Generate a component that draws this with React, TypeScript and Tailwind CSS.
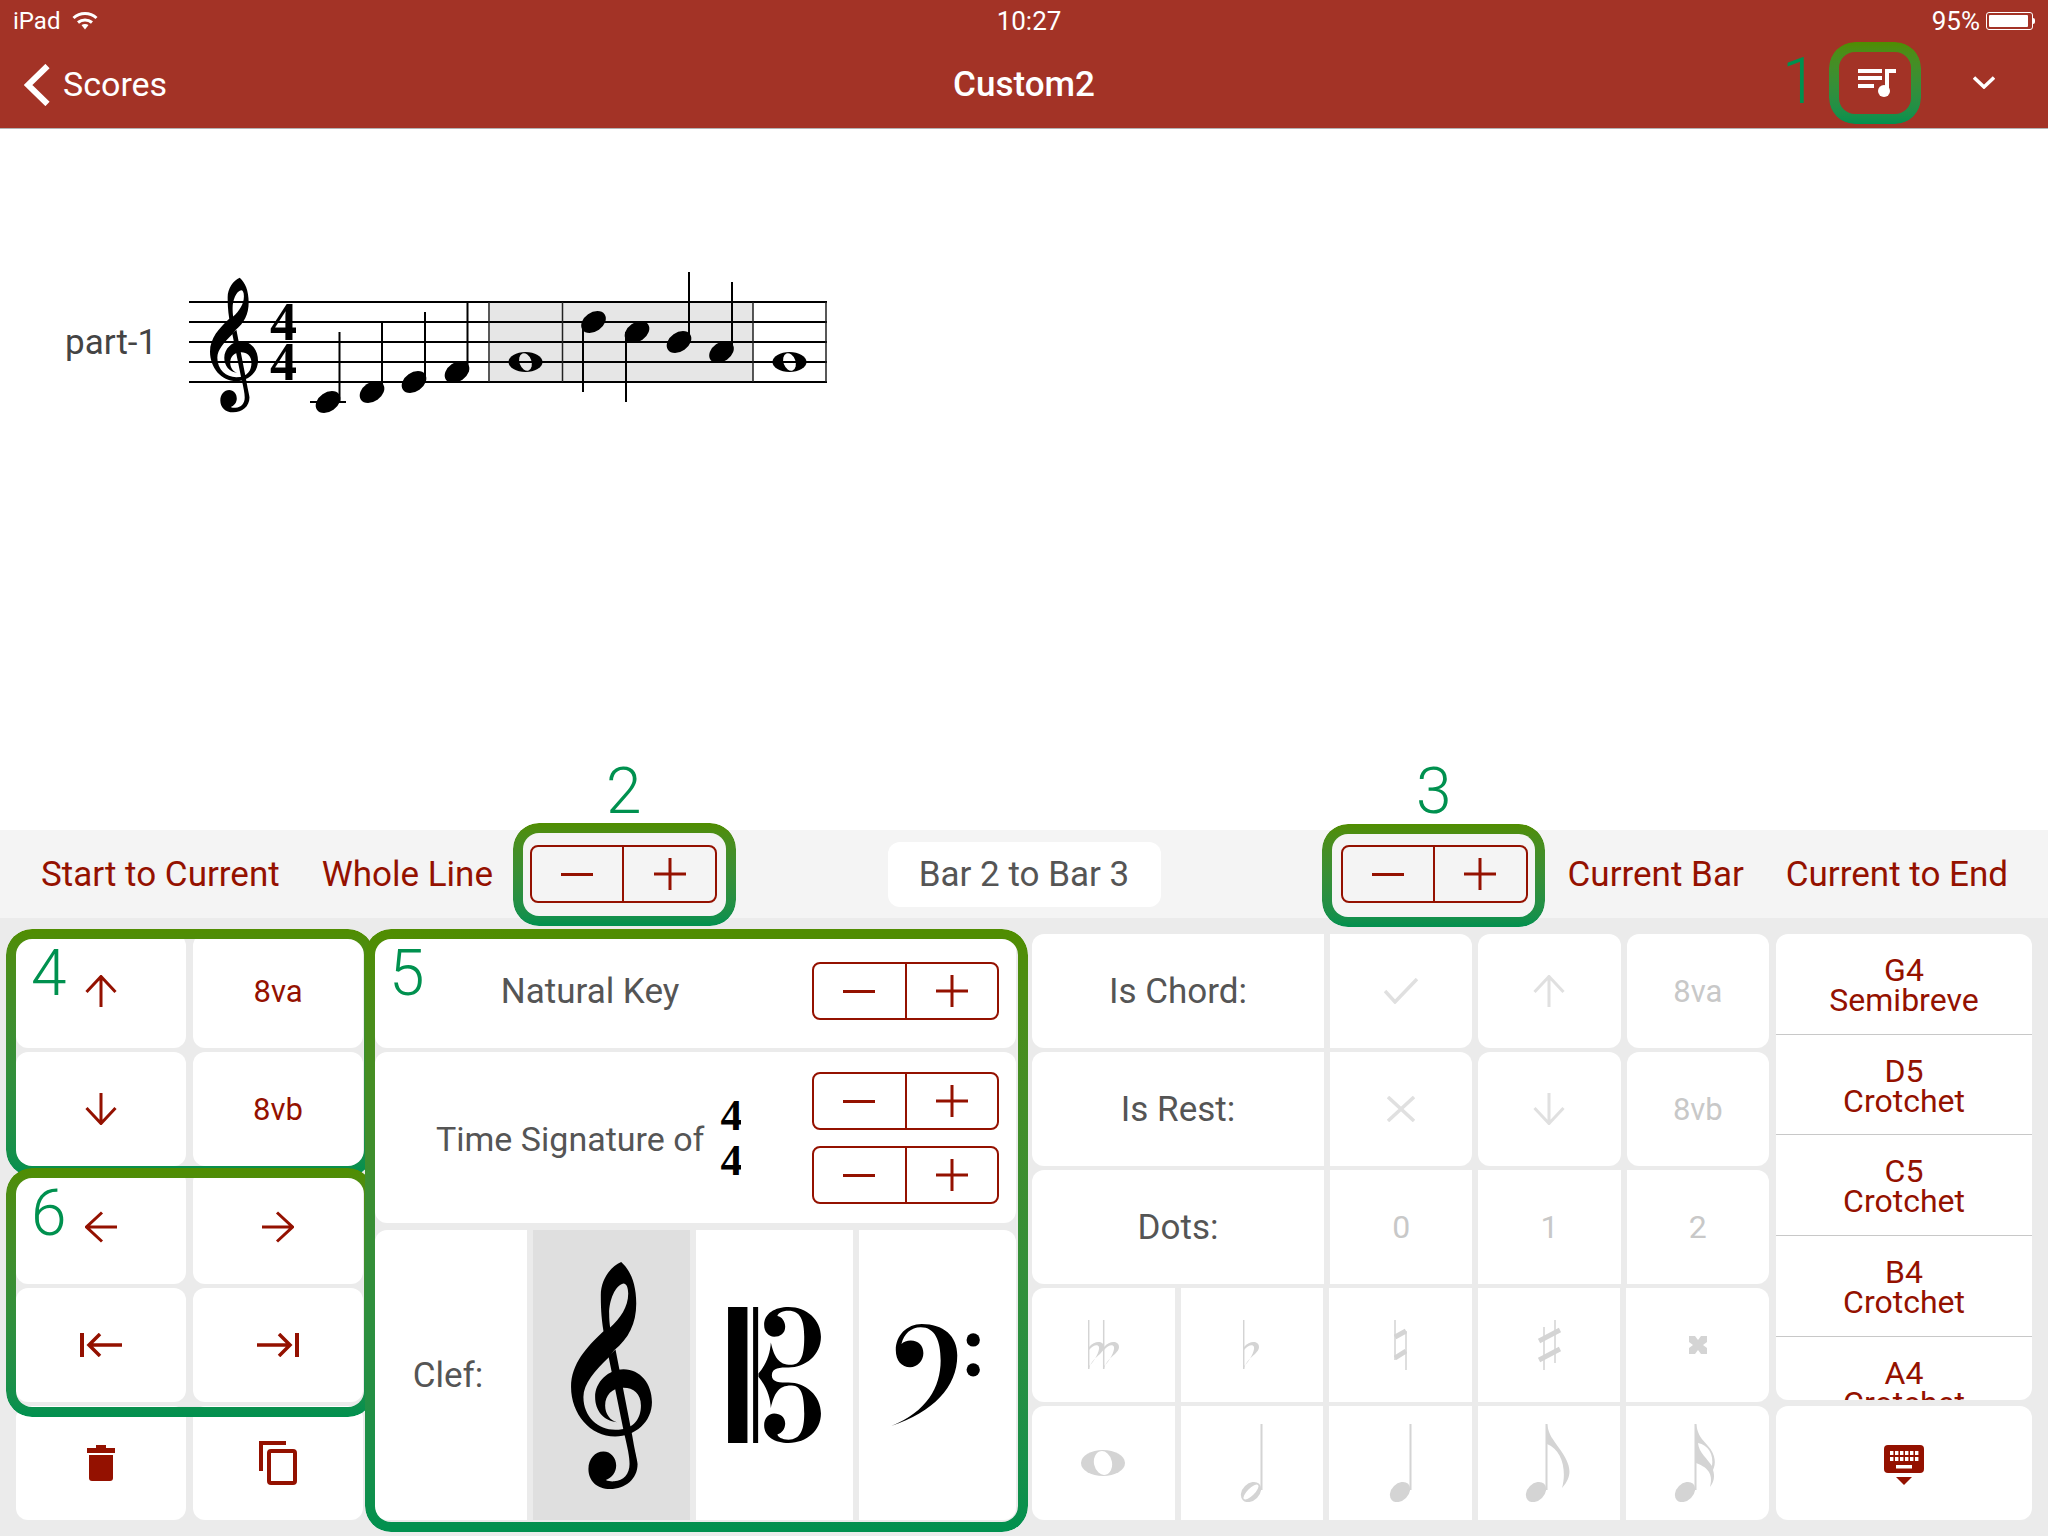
import type { ReactNode } from 'react';

const RED = '#941100';

function Stepper() {
  return (
    <div className="flex h-[58px] w-[187px] rounded-[8px] border-2 border-[#941100]">
      <div className="flex flex-1 items-center justify-center border-r-2 border-[#941100]">
        <div className="h-[3px] w-[32px] bg-[#941100]" />
      </div>
      <div className="flex flex-1 items-center justify-center">
        <svg width="32" height="32" viewBox="0 0 32 32" stroke={RED} strokeWidth="3">
          <path d="M0 16H32M16 0V32" />
        </svg>
      </div>
    </div>
  );
}

function Arrow({ dir, color = RED }: { dir: 'up' | 'down' | 'left' | 'right'; color?: string }) {
  const rotate = { up: 0, right: 90, down: 180, left: 270 }[dir];
  return (
    <svg width="32" height="32" viewBox="0 0 32 32" fill="none" stroke={color} strokeWidth="3">
      <g transform={`rotate(${rotate} 16 16)`}>
        <path d="M16 1V32M1.5 17L16 1.5L30.5 17" />
      </g>
    </svg>
  );
}

function JumpArrow({ flip }: { flip?: boolean }) {
  return (
    <svg width="42" height="24" viewBox="0 0 42 24" fill="none" stroke={RED} strokeWidth="3.5">
      <g transform={flip ? 'matrix(-1 0 0 1 42 0)' : undefined}>
        <path d="M2 0V24" strokeWidth="4" />
        <path d="M42 12H9M20 1L9 12L20 23" />
      </g>
    </svg>
  );
}

function Trash() {
  return (
    <svg width="30" height="36" viewBox="0 0 30 36" fill={RED}>
      <path d="M10 0H20V3H29V8H1V3H10Z" />
      <path d="M3 10H27V33Q27 36 24 36H6Q3 36 3 33Z" />
    </svg>
  );
}

function CopyIcon() {
  return (
    <svg width="38" height="44" viewBox="0 0 38 44" fill="none" stroke={RED} strokeWidth="4">
      <path d="M2 30V2H27" />
      <rect x="10" y="10" width="26" height="32" rx="2" />
    </svg>
  );
}

function KeyboardIcon() {
  const keys = [0, 1, 2, 3, 4, 5];
  return (
    <svg width="40" height="40" viewBox="0 0 40 40" className="mt-[3px]">
      <rect width="40" height="28" rx="4" fill={RED} />
      {keys.map((k) => (
        <g key={k} fill="#fff">
          <rect x={6 + k * 5} y="6" width="3.4" height="4" />
          <rect x={6 + k * 5} y="12" width="3.4" height="4" />
        </g>
      ))}
      <rect x="12" y="20" width="16" height="3.5" fill="#fff" />
      <path d="M12 32H28L20 40Z" fill={RED} />
    </svg>
  );
}

const TREBLE_BODY =
  'M243 36C270 60 288 100 288 160C288 220 265 265 222 300L207 320C165 360 130 400 130 440C130 500 175 538 225 538C285 538 302 500 302 465C302 430 280 412 250 412C215 412 195 435 195 465C195 490 210 510 230 515C190 512 165 480 165 440C165 395 205 357 250 357C300 357 335 400 335 455C335 515 285 558 225 558C150 558 93 490 93 410C93 340 140 290 190 243C183 200 182 165 182 135C182 90 210 50 243 36ZM250 100C225 105 207 150 207 190C207 205 208 220 210 232C240 205 264 170 264 130C264 110 258 100 250 100Z';
const TREBLE_TAIL =
  'M205 318L226 298L276 555C285 610 292 630 292 640C292 685 255 715 210 715C170 715 145 690 145 655C145 625 165 603 190 603C212 603 228 622 228 645C228 665 215 682 197 688C205 692 215 693 222 692C250 690 268 670 268 640C268 620 262 590 252 550Z';

function TrebleClef({ width, height, x, y }: { width: number; height: number; x?: number; y?: number }) {
  return (
    <svg x={x} y={y} width={width} height={height} viewBox="93 36 242 679" fill="#000">
      <path fillRule="evenodd" d={TREBLE_BODY} />
      <path d={TREBLE_TAIL} />
    </svg>
  );
}

function AltoClef() {
  return (
    <svg width="93" height="136" viewBox="84 81 278 407" fill="#000">
      <rect x="84" y="81" width="58" height="407" />
      <rect x="159" y="81" width="15" height="407" />
      <path d="M175 280C200 250 210 220 212 187C222 230 235 255 275 254C305 252 312 220 312 170C312 120 300 92 265 92C245 92 232 100 232 108C245 110 255 125 255 140C255 160 240 170 222 170C205 170 192 155 192 135C192 100 225 81 265 81C320 81 362 120 362 170C362 225 315 262 265 262C240 262 215 262 215 285C215 307 240 307 265 307C315 307 362 345 362 400C362 450 320 488 265 488C225 488 192 470 192 435C192 415 205 400 222 400C240 400 255 410 255 430C255 445 245 460 232 462C232 470 245 478 265 478C300 478 312 450 312 400C312 350 305 316 275 316C235 315 222 340 212 383C210 350 200 320 175 290Z" />
    </svg>
  );
}

function BassClef() {
  return (
    <svg width="89" height="102" viewBox="573 130 267 307" fill="#000">
      <path d="M573 437C700 395 772 320 772 225C772 165 730 130 665 130C620 130 587 165 587 208C587 240 605 260 630 260C652 260 670 240 670 218C670 195 655 180 632 180C620 180 610 185 604 190C612 160 632 140 662 140C705 140 722 180 722 240C722 320 680 395 573 437Z" />
      <circle cx="820" cy="178" r="20" />
      <circle cx="820" cy="268" r="20" />
    </svg>
  );
}

function Staff() {
  const lines = [302, 322, 342, 362, 382];
  // [head x, head y, stem x, stem end y]
  const notes = [
    [328, 402, 339.5, 332],
    [372, 392, 382, 322],
    [414, 382, 425, 312],
    [457, 372, 467.5, 302],
    [593.5, 322, 583, 392],
    [637, 332, 626, 402],
    [679, 342, 689, 272],
    [721.5, 352, 732, 282],
  ];
  const wholes: [number, string][] = [
    [525.5, '#e6e6e6'],
    [789.5, '#ffffff'],
  ];
  return (
    <svg width="641" height="160" viewBox="189 260 641 160">
      <rect x="490" y="302" width="263" height="80" fill="#e6e6e6" />
      {wholes.map(([x, hole]) => (
        <g key={x}>
          <ellipse cx={x} cy="362" rx="17" ry="10" fill="#000" />
          <ellipse cx={x} cy="362" rx="6" ry="9" fill={hole} transform={`rotate(-20 ${x} 362)`} />
        </g>
      ))}
      {lines.map((y) => (
        <rect key={y} x="189" y={y - 1} width="638" height="2" fill="#000" />
      ))}
      {[489, 562.5, 753, 826].map((x) => (
        <rect key={x} x={x - 0.75} y="302" width="1.5" height="80" fill="#222" />
      ))}
      <rect x="310" y="401" width="36" height="2" fill="#000" />
      {notes.map(([hx, hy, sx, sy]) => (
        <g key={hx}>
          <ellipse cx={hx} cy={hy} rx="13.5" ry="9.5" fill="#000" transform={`rotate(-35 ${hx} ${hy})`} />
          <rect x={sx - 1} y={Math.min(hy, sy)} width="2" height={Math.abs(hy - sy)} fill="#000" />
        </g>
      ))}
      <TrebleClef x={210} y={277} width={48} height={136} />
      <text x="270" y="340" fontFamily="'Liberation Serif', serif" fontWeight="700" fontSize="54">4</text>
      <text x="270" y="380" fontFamily="'Liberation Serif', serif" fontWeight="700" fontSize="54">4</text>
    </svg>
  );
}

const FADED = '#d4d4d4';

function Flat({ x = 0 }: { x?: number }) {
  return (
    <g transform={`translate(${x} 0)`}>
      <path d="M0.7 0V49" stroke={FADED} strokeWidth="1.5" />
      <path d="M1 49C3 38 16 34 16 27C16 21 7 20 1 27V30C5 25 10 24 11 27C12 31 6 42 1 46Z" fill={FADED} />
    </g>
  );
}

function Accidental({ kind }: { kind: 'bb' | 'b' | 'n' | 's' | 'x' }) {
  if (kind === 'bb')
    return (
      <svg width="31" height="50" viewBox="0 0 31 50">
        <Flat />
        <Flat x={15} />
      </svg>
    );
  if (kind === 'b')
    return (
      <svg width="17" height="50" viewBox="0 0 17 50">
        <Flat />
      </svg>
    );
  if (kind === 'n')
    return (
      <svg width="13" height="50" viewBox="0 0 13 50" stroke={FADED}>
        <path d="M1 0V40M12 11V50" strokeWidth="1.5" />
        <path d="M1 17L12 11M1 38L12 31" strokeWidth="5" />
      </svg>
    );
  if (kind === 's')
    return (
      <svg width="23" height="50" viewBox="0 0 23 50" stroke={FADED}>
        <path d="M6 7V50M17 0V43" strokeWidth="1.5" />
        <path d="M1 21L22 10M1 40L22 29" strokeWidth="5" />
      </svg>
    );
  return (
    <svg width="18" height="18" viewBox="0 0 18 18" fill={FADED}>
      <path d="M0 0H6L9 4L12 0H18V6L14 9L18 12V18H12L9 14L6 18H0V12L4 9L0 6Z" />
    </svg>
  );
}

function NoteValue({ kind }: { kind: 'whole' | 'half' | 'quarter' | 'eighth' | 'sixteenth' }) {
  if (kind === 'whole')
    return (
      <svg width="44" height="26" viewBox="0 0 44 26">
        <ellipse cx="22" cy="13" rx="22" ry="13" fill={FADED} />
        <ellipse cx="22" cy="13" rx="9" ry="12" fill="#fff" transform="rotate(-12 22 13)" />
      </svg>
    );
  const flagged = kind === 'eighth' || kind === 'sixteenth';
  return (
    <svg width={flagged ? 48 : 23} height="78" viewBox={`0 0 ${flagged ? 48 : 23} 78`}>
      <ellipse cx="11" cy="68" rx="11.5" ry="8.5" fill={FADED} transform="rotate(-45 11 68)" />
      {kind === 'half' && <ellipse cx="11" cy="68" rx="10" ry="3.6" fill="#fff" transform="rotate(-45 11 68)" />}
      <rect x="20.5" y="0" width="2" height="66" fill={FADED} />
      {kind === 'eighth' && (
        <path d="M22 0C24 12 28 15 34 24C44 38 50 50 37 64C42 46 37 26 22 20Z" fill={FADED} />
      )}
      {kind === 'sixteenth' && (
        <path
          fillRule="evenodd"
          d="M22 0C24 12 28 15 34 22C42 31 42 40 39 46C41 52 40 58 36 63C39 52 36 44 22 39V0ZM24 19C25 29 33 34 38 42C40 30 34 21 24 19Z"
          fill={FADED}
        />
      )}
    </svg>
  );
}

function Card({ children, className = 'rounded-xl' }: { children?: ReactNode; className?: string }) {
  return <div className={`flex items-center justify-center bg-white ${className}`}>{children}</div>;
}

function Annotation({ className }: { className: string }) {
  return (
    <div
      className={`pointer-events-none absolute rounded-[26px] border-[10px] border-transparent bg-gradient-to-b from-[#508d00] to-[#00904f] [background-origin:border-box] [mask:linear-gradient(#000_0_0)_padding-box_exclude,linear-gradient(#000_0_0)] ${className}`}
    />
  );
}

function Num({ className, children }: { className: string; children: ReactNode }) {
  return <span className={`absolute text-[64px] leading-none font-light text-[#00914f] ${className}`}>{children}</span>;
}

const listNotes = [
  ['G4', 'Semibreve'],
  ['D5', 'Crotchet'],
  ['C5', 'Crotchet'],
  ['B4', 'Crotchet'],
  ['A4', 'Crotchet'],
];

export default function App() {
  const cellL = 'rounded-l-xl';
  const cellR = 'rounded-r-xl';
  const cell = '';
  const label = 'pt-[2px] text-[35px] text-[#555]';
  const faded = 'text-[32px] text-[#c8c8c8]';
  const octave = 'pt-[2px] text-[31px] text-[#941100]';

  return (
    <div className="relative flex h-[1536px] w-[2048px] flex-col overflow-hidden bg-[#ebebeb] font-[Roboto,sans-serif]">
      <header className="h-[129px] shrink-0 border-b border-[#b3b3b3] bg-[#a33326] text-white">
        <div className="grid h-[41px] grid-cols-3 items-center px-[13px] pt-[1px] text-[26px]">
          <div className="flex items-center gap-[12px]">
            <span className="text-[24px]">iPad</span>
            <svg width="26" height="18" viewBox="0 0 26 18" fill="none" stroke="#fff" strokeWidth="3">
              <path d="M1.5 6C8 0 18 0 24.5 6M6 10.5C10 7 16 7 20 10.5" />
              <path d="M9.5 13L13 17.5L16.5 13C14.5 11.5 11.5 11.5 9.5 13Z" fill="#fff" stroke="none" />
            </svg>
          </div>
          <div className="pl-[10px] text-center">10:27</div>
          <div className="flex items-center justify-end gap-[6px] pr-0">
            <span>95%</span>
            <div className="flex items-center">
              <div className="h-[18px] w-[47px] rounded-[3px] border border-white p-[2px]">
                <div className="h-full w-[94%] rounded-[1px] bg-white" />
              </div>
              <div className="h-[6px] w-[2px] rounded-r-sm bg-white" />
            </div>
          </div>
        </div>
        <div className="grid h-[87px] grid-cols-[1fr_auto_1fr] items-center">
          <div className="flex items-center gap-[13px] pl-[24px]">
            <svg width="26" height="42" viewBox="0 0 26 42" fill="none" stroke="#fff" strokeWidth="6">
              <path d="M23.5 2L4 21L23.5 40" />
            </svg>
            <span className="text-[34px]">Scores</span>
          </div>
          <div className="pt-[2px] text-[35px] font-medium">Custom2</div>
          <div className="flex items-center justify-end gap-[77px] pr-[53px]">
            <svg width="38" height="32" viewBox="0 0 38 32" fill="#fff">
              <rect y="0" width="24" height="4" />
              <rect y="7" width="24" height="4" />
              <rect y="15" width="16" height="4" />
              <path d="M27 0H38V4H31V22H27Z" />
              <circle cx="26" cy="22" r="6" />
            </svg>
            <svg width="22" height="13" viewBox="0 0 22 13" fill="none" stroke="#fff" strokeWidth="3.5" className="mb-[5px]">
              <path d="M1 1.5L11 11L21 1.5" />
            </svg>
          </div>
        </div>
      </header>

      <main className="h-[701px] shrink-0 bg-white pt-[131px]">
        <div className="flex items-center pl-[65px]">
          <div className="mt-[6px] w-[124px] text-[35px] text-[#444]">part-1</div>
          <Staff />
        </div>
      </main>

      <div className="grid h-[88px] shrink-0 grid-cols-[1fr_auto_1fr] items-center bg-[#f4f4f4] text-[35px] text-[#941100]">
        <div className="flex items-center pl-[41px]">
          <span className="pt-[2px]">Start to Current</span>
          <span className="ml-[42px] pt-[2px]">Whole Line</span>
          <div className="ml-[37px]"><Stepper /></div>
        </div>
        <div className="flex h-[65px] w-[273px] items-center justify-center rounded-xl bg-white pt-[2px] text-[#555]">
          Bar 2 to Bar 3
        </div>
        <div className="flex items-center justify-end pr-[40px]">
          <Stepper />
          <span className="ml-[40px] pt-[2px]">Current Bar</span>
          <span className="ml-[42px] pt-[2px]">Current to End</span>
        </div>
      </div>

      <div className="flex flex-1 pt-[16px] pl-[16px]">
        <div className="grid h-[586px] w-[347px] grid-cols-2 grid-rows-5 gap-x-[7px] gap-y-[4px]">
          <Card><Arrow dir="up" /></Card>
          <Card><span className={octave}>8va</span></Card>
          <Card><Arrow dir="down" /></Card>
          <Card><span className={octave}>8vb</span></Card>
          <Card><Arrow dir="left" /></Card>
          <Card><Arrow dir="right" /></Card>
          <Card><JumpArrow /></Card>
          <Card><JumpArrow flip /></Card>
          <Card><Trash /></Card>
          <Card><CopyIcon /></Card>
        </div>

        <div className="ml-[12px] flex h-[586px] w-[641px] flex-col">
          <div className="flex h-[114px] items-center rounded-xl bg-white pr-[17px]">
            <div className={`w-[430px] text-center ${label}`}>Natural Key</div>
            <div className="ml-auto"><Stepper /></div>
          </div>
          <div className="mt-[4px] flex h-[171px] items-center rounded-xl bg-white pr-[17px] pl-[61px]">
            <div className="pt-[3px] text-[34px] text-[#555]">Time Signature of</div>
            <div className="ml-[16px] flex w-[21px] flex-col overflow-hidden font-['Liberation_Serif',serif] text-[44px] leading-[45px] font-bold text-black">
              <span>4</span>
              <span>4</span>
            </div>
            <div className="ml-auto flex flex-col gap-[16px] pt-[1px]">
              <Stepper />
              <Stepper />
            </div>
          </div>
          <div className="mt-[7px] flex h-[290px] gap-[6px]">
            <Card className={`w-[152px] rounded-l-xl pr-[6px] ${label}`}>Clef:</Card>
            <Card className="w-[157px] !bg-[#dfdfdf]"><TrebleClef width={81} height={227} /></Card>
            <Card className="w-[157px]"><AltoClef /></Card>
            <Card className="w-[157px] rounded-r-xl"><div className="mr-[4px] flex"><BassClef /></div></Card>
          </div>
        </div>

        <div className="ml-[16px] flex h-[586px] w-[737px] flex-col gap-[4px]">
          <div className="grid h-[114px] grid-cols-[292px_1fr_1fr_1fr] gap-x-[6px]">
            <Card className={`${cellL} ${label}`}>Is Chord:</Card>
            <Card className={cellR}>
              <svg width="35" height="26" viewBox="0 0 35 26" fill="none" stroke="#e0e0e0" strokeWidth="3.5">
                <path d="M1 13L11 24L33 1" />
              </svg>
            </Card>
            <Card><Arrow dir="up" color="#e0e0e0" /></Card>
            <Card><span className="pt-[2px] text-[31px] text-[#c8c8c8]">8va</span></Card>
          </div>
          <div className="grid h-[114px] grid-cols-[292px_1fr_1fr_1fr] gap-x-[6px]">
            <Card className={`${cellL} ${label}`}>Is Rest:</Card>
            <Card className={cellR}>
              <svg width="28" height="26" viewBox="0 0 28 26" fill="none" stroke="#e0e0e0" strokeWidth="3.5">
                <path d="M1 1L27 25M27 1L1 25" />
              </svg>
            </Card>
            <Card><Arrow dir="down" color="#e0e0e0" /></Card>
            <Card><span className="pt-[2px] text-[31px] text-[#c8c8c8]">8vb</span></Card>
          </div>
          <div className="grid h-[114px] grid-cols-[292px_1fr_1fr_1fr] gap-x-[6px]">
            <Card className={`${cellL} ${label}`}>Dots:</Card>
            <Card className={cell}><span className={faded}>0</span></Card>
            <Card className={cell}><span className={faded}>1</span></Card>
            <Card className={cellR}><span className={faded}>2</span></Card>
          </div>
          <div className="grid h-[114px] grid-cols-5 gap-x-[6px]">
            <Card className={cellL}><Accidental kind="bb" /></Card>
            <Card className={cell}><Accidental kind="b" /></Card>
            <Card className={cell}><Accidental kind="n" /></Card>
            <Card className={cell}><Accidental kind="s" /></Card>
            <Card className={cellR}><Accidental kind="x" /></Card>
          </div>
          <div className="grid h-[114px] grid-cols-5 gap-x-[6px]">
            <Card className={cellL}><NoteValue kind="whole" /></Card>
            <Card className={cell}><NoteValue kind="half" /></Card>
            <Card className={cell}><NoteValue kind="quarter" /></Card>
            <Card className={cell}><NoteValue kind="eighth" /></Card>
            <Card className={cellR}><NoteValue kind="sixteenth" /></Card>
          </div>
        </div>

        <div className="ml-[7px] flex h-[586px] w-[256px] flex-col">
          <div className="h-[466px] overflow-hidden rounded-xl bg-white">
            {listNotes.map(([pitch, duration]) => (
              <div
                key={pitch}
                className="flex h-[100.7px] flex-col items-center justify-center border-b border-[#c8c8c8] pt-[2px] text-[32px] leading-[30px] text-[#941100]"
              >
                <span>{pitch}</span>
                <span>{duration}</span>
              </div>
            ))}
          </div>
          <Card className="mt-[6px] h-[114px] rounded-xl">
            <KeyboardIcon />
          </Card>
        </div>
      </div>

      <Annotation className="top-[42px] left-[1829px] h-[82px] w-[92px]" />
      <Annotation className="top-[823px] left-[513px] h-[103px] w-[223px]" />
      <Annotation className="top-[824px] left-[1322px] h-[103px] w-[223px]" />
      <Annotation className="top-[929px] left-[6px] h-[247px] w-[368px]" />
      <Annotation className="top-[1168px] left-[6px] h-[249px] w-[368px]" />
      <Annotation className="top-[929px] left-[365px] h-[603px] w-[663px]" />

      <Num className="top-[50px] left-[1782px]">1</Num>
      <Num className="top-[760px] left-[606px]">2</Num>
      <Num className="top-[760px] left-[1416px]">3</Num>
      <Num className="top-[942px] left-[31px]">4</Num>
      <Num className="top-[942px] left-[389px]">5</Num>
      <Num className="top-[1182px] left-[31px]">6</Num>
    </div>
  );
}
